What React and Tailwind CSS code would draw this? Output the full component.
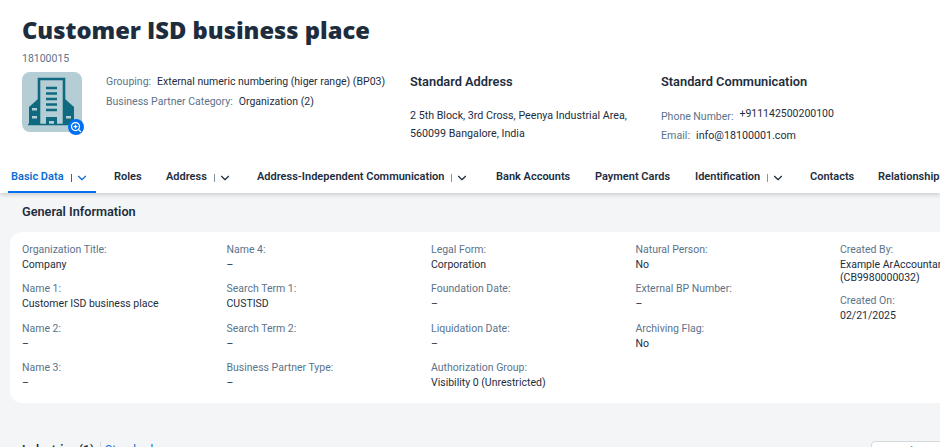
import { ChevronDown, ZoomIn } from 'lucide-react'

const tabs = [
  { label: 'Basic Data', menu: true, active: true, width: 'w-[103px]' },
  { label: 'Roles', width: 'w-[52px]' },
  { label: 'Address', menu: true, width: 'w-[91px]' },
  { label: 'Address-Independent Communication', menu: true, width: 'w-[239px]' },
  { label: 'Bank Accounts', width: 'w-[99px]' },
  { label: 'Payment Cards', width: 'w-[100px]' },
  { label: 'Identification', menu: true, width: 'w-[115px]' },
  { label: 'Contacts', width: 'w-[68px]' },
  { label: 'Relationships', width: 'w-[100px]' },
]

const columns = [
  [
    ['Organization Title:', 'Company'],
    ['Name 1:', 'Customer ISD business place'],
    ['Name 2:', '–'],
    ['Name 3:', '–'],
  ],
  [
    ['Name 4:', '–'],
    ['Search Term 1:', 'CUSTISD'],
    ['Search Term 2:', '–'],
    ['Business Partner Type:', '–'],
  ],
  [
    ['Legal Form:', 'Corporation'],
    ['Foundation Date:', '–'],
    ['Liquidation Date:', '–'],
    ['Authorization Group:', 'Visibility 0 (Unrestricted)'],
  ],
  [
    ['Natural Person:', 'No'],
    ['External BP Number:', '–'],
    ['Archiving Flag:', 'No'],
  ],
]

function Field({ label, value }) {
  return (
    <div className="h-[39.300px] text-[10.500px] leading-[15px]">
      <p className="text-[#5b738b]">{label}</p>
      <p className="text-[#1d2d3e]">{value}</p>
    </div>
  )
}

function BuildingIcon() {
  return (
    <svg viewBox="0 0 60 60" className="w-[60px] h-[60px]">
      <path d="M17 52V7h25v45" fill="none" stroke="#0f6a80" strokeWidth="2.6" />
      <path d="M24 16h11M24 21.500h11M24 27h11M24 32.500h11M24 38h11" stroke="#0f6a80" strokeWidth="2.4" />
      <path d="M24 52v-7h11v7h-3v-3h-5v3z" fill="#0f6a80" />
      <path d="M7 52V35l9-8v25zM43 27l9 8v17h-9z" fill="#0f6a80" />
      <path d="M10 36h5v2.500h-5zM10 44h5v2.500h-5zM44 44h5v2.500h-5z" fill="#b5cdd5" />
      <path d="M6 52.500h47" stroke="#0f6a80" strokeWidth="1.500" />
    </svg>
  )
}

function App() {
  return (
    <div className="w-[940px] h-[447px] overflow-hidden bg-[#f4f5f7] font-['Roboto',sans-serif]">
      <div className="relative z-10 bg-white shadow-[0_2px_4px_rgba(0,0,0,0.16)]">
        <div className="h-[160px] pt-[14px] pl-[22px]">
          <h1 className="font-['Open_Sans',sans-serif] text-[23.700px] leading-[32px] font-extrabold text-[#1d2d3e]">Customer ISD business place</h1>
          <p className="mt-[5px] text-[10.500px] leading-[15px] text-[#5b738b]">18100015</p>
          <div className="flex mt-[6px]">
            <div className="relative w-[60px] h-[60px] rounded-[8px] bg-[#b5cdd5]">
              <BuildingIcon />
              <span className="absolute left-[46px] top-[47px] w-[16px] h-[16px] rounded-full bg-[#0070f2] flex items-center justify-center">
                <ZoomIn size={12} strokeWidth={2.5} className="text-white" />
              </span>
            </div>
            <div className="w-[304px] ml-[24px] text-[10.500px] leading-[15px] pt-[2px] whitespace-nowrap">
              <p>
                <span className="text-[#5b738b]">Grouping:</span>
                <span className="ml-[6px] text-[#1d2d3e]">External numeric numbering (higer range) (BP03)</span>
              </p>
              <p className="mt-[5px]">
                <span className="text-[#5b738b]">Business Partner Category:</span>
                <span className="ml-[6px] text-[#1d2d3e]">Organization (2)</span>
              </p>
            </div>
            <div className="w-[251px] mt-[1px]">
              <h2 className="text-[12.800px] leading-[18px] font-semibold text-[#1d2d3e]">Standard Address</h2>
              <p className="mt-[16px] text-[10.700px] leading-[18px] text-[#1d2d3e]">
                2 5th Block, 3rd Cross, Peenya Industrial Area,
                <br />
                560099 Bangalore, India
              </p>
            </div>
            <div className="mt-[1px]">
              <h2 className="text-[12.800px] leading-[18px] font-semibold text-[#1d2d3e]">Standard Communication</h2>
              <p className="mt-[18px] text-[10.500px] leading-[15px]">
                <span className="text-[#5b738b]">Phone Number:</span>
                <span className="relative top-[-3px] ml-[6px] text-[#1d2d3e]">+911142500200100</span>
              </p>
              <p className="mt-[4px] text-[10.700px] leading-[15px]">
                <span className="text-[#5b738b]">Email:</span>
                <span className="ml-[6px] text-[#1d2d3e]">info@18100001.com</span>
              </p>
            </div>
          </div>
        </div>
        <div className="flex h-[33px] pl-[8px] whitespace-nowrap">
          {tabs.map((tab) => (
            <div key={tab.label} className={`${tab.width} shrink-0`}>
              <div
                className={`inline-flex items-center h-[33px] pt-[4px] px-[3px] text-[11px] font-semibold border-b-2 ${
                  tab.active ? 'text-[#0a6ed1] border-[#0070f2] pr-[7px]' : 'text-[#1d2d3e] border-transparent'
                }`}
              >
                {tab.label}
                {tab.menu && (
                  <span className="flex items-center ml-[7px] gap-[3px]">
                    <span className={`w-px h-[8px] ${tab.active ? 'bg-[#0a6ed1]' : 'bg-[#8396a8]'}`} />
                    <ChevronDown size={14} strokeWidth={2} />
                  </span>
                )}
              </div>
            </div>
          ))}
        </div>
      </div>

      <h2 className="pl-[22px] pt-[10px] h-[39px] text-[12.700px] leading-[18px] font-semibold text-[#1d2d3e]">General Information</h2>

      <div className="ml-[10px] h-[171px] rounded-l-[12px] bg-white pl-[12px] pt-[10px] flex">
        {columns.map((col, i) => (
          <div key={i} className="w-[204.500px] shrink-0">
            {col.map(([label, value]) => (
              <Field key={label} label={label} value={value} />
            ))}
          </div>
        ))}
        <div className="w-[100px] shrink-0 text-[10.500px] leading-[13px] whitespace-nowrap">
          <p className="text-[#5b738b] leading-[15px]">Created By:</p>
          <p className="text-[#1d2d3e] mt-[1px]">Example ArAccountant</p>
          <p className="text-[#1d2d3e]">(CB9980000032)</p>
          <p className="text-[#5b738b] leading-[15px] mt-[9px]">Created On:</p>
          <p className="text-[#1d2d3e] leading-[15px]">02/21/2025</p>
        </div>
      </div>

      <div className="flex items-start mt-[39px] pl-[22px] h-[5px] relative text-[12px] leading-[16px]">
        <span className="font-semibold text-[#1d2d3e]">Industries (1)</span>
        <span className="ml-[6px] pl-[4px] border-l border-[#d9d9d9] text-[#0a6ed1]">Standard</span>
        <span className="absolute left-[871px] top-[-1px] w-[80px] h-[20px] bg-white border border-[#d5dadd] rounded-[4px] pl-[8px] pt-[2px] text-[#5b738b]">Search</span>
      </div>
    </div>
  )
}

export default App
